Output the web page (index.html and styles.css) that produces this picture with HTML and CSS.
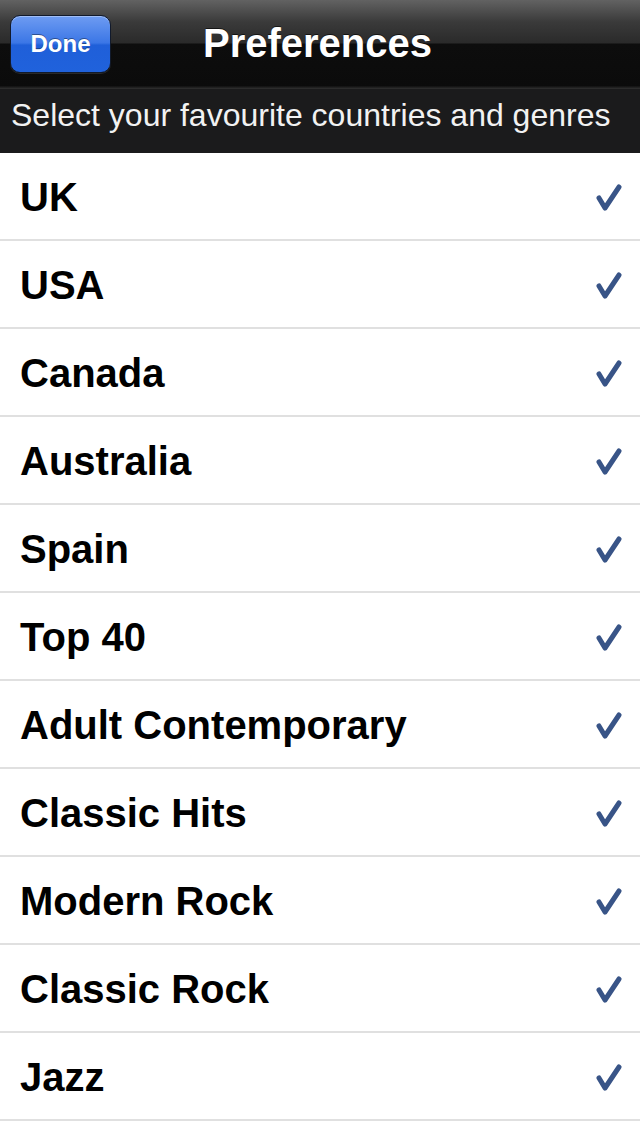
FILE: index.html
```html
<!DOCTYPE html>
<html lang="en">
<head>
  <meta charset="UTF-8" />
  <meta name="viewport" content="width=device-width, initial-scale=1.0"/>
  <title>Preferences</title>
  <link rel="stylesheet" href="styles.css">
</head>
<body>
  <div class="navbar">
    <button class="done-btn">Done</button>
    <h1 class="title">Preferences</h1>
  </div>

  <div class="subtitle">Select your favourite countries and genres</div>

  <ul class="pref-list">
    <li class="pref-row"><span>UK</span><svg class="check" viewBox="0 0 26 28"><path d="M3 15 L9 25 L23 4"/></svg></li>
    <li class="pref-row"><span>USA</span><svg class="check" viewBox="0 0 26 28"><path d="M3 15 L9 25 L23 4"/></svg></li>
    <li class="pref-row"><span>Canada</span><svg class="check" viewBox="0 0 26 28"><path d="M3 15 L9 25 L23 4"/></svg></li>
    <li class="pref-row"><span>Australia</span><svg class="check" viewBox="0 0 26 28"><path d="M3 15 L9 25 L23 4"/></svg></li>
    <li class="pref-row"><span>Spain</span><svg class="check" viewBox="0 0 26 28"><path d="M3 15 L9 25 L23 4"/></svg></li>
    <li class="pref-row"><span>Top 40</span><svg class="check" viewBox="0 0 26 28"><path d="M3 15 L9 25 L23 4"/></svg></li>
    <li class="pref-row"><span>Adult Contemporary</span><svg class="check" viewBox="0 0 26 28"><path d="M3 15 L9 25 L23 4"/></svg></li>
    <li class="pref-row"><span>Classic Hits</span><svg class="check" viewBox="0 0 26 28"><path d="M3 15 L9 25 L23 4"/></svg></li>
    <li class="pref-row"><span>Modern Rock</span><svg class="check" viewBox="0 0 26 28"><path d="M3 15 L9 25 L23 4"/></svg></li>
    <li class="pref-row"><span>Classic Rock</span><svg class="check" viewBox="0 0 26 28"><path d="M3 15 L9 25 L23 4"/></svg></li>
    <li class="pref-row"><span>Jazz</span><svg class="check" viewBox="0 0 26 28"><path d="M3 15 L9 25 L23 4"/></svg></li>
  </ul>
</body>
</html>
```

FILE: styles.css
```css
* {
  margin: 0; padding: 0; box-sizing: border-box;
}

body {
  font-family: 'Liberation Sans', Arial, sans-serif;
  background: #fff;
  color: #000;
}

.navbar {
  height: 88px;
  display: flex;
  align-items: center;
  justify-content: center;
  position: relative;
  background: linear-gradient(to bottom, #626262 0px, #3a3a3a 22px, #2a2a2a 43px, #0d0d0d 44px, #0b0b0b 86px, #202020 87px);
}

.done-btn {
  position: absolute;
  left: 10px; top: 15px;
  width: 101px; height: 58px;
  border: 1px solid #111a2c;
  border-radius: 10px;
  background: linear-gradient(to bottom, #6e9cf2 0%, #3b76e6 48%, #1f5fd9 52%, #2062dc 100%);
  box-shadow: inset 0 1px 0 rgba(255,255,255,0.35), 0 1px 0 rgba(255,255,255,0.12);
  color: #fff;
  font-family: inherit;
  font-weight: bold;
  font-size: 24px;
  text-shadow: 0 -1px 0 rgba(0,0,0,0.4);
}

.title {
  color: #fff;
  font-size: 40px;
  font-weight: bold;
  text-shadow: 0 -1px 0 rgba(0,0,0,0.6);
  margin-top: -1px;
  margin-left: -5px;
}

.subtitle {
  height: 65px;
  padding: 1px 0 0 11px;
  background: #1b1b1c;
  border-top: 1px solid #2c2c2c;
  color: #f2f2f2;
  font-size: 32px;
  line-height: 50px;
}

.pref-list {
  list-style: none;
}

.pref-row {
  height: 88px;
  border-bottom: 2px solid #e0e0e0;
  display: flex;
  align-items: center;
  justify-content: space-between;
  padding: 2px 18px 0 20px;
  font-size: 40px;
  font-weight: bold;
}

.check {
  width: 26px; height: 28px;
  fill: none;
  stroke: #385487;
  stroke-width: 5;
  stroke-linecap: round;
  stroke-linejoin: round;
}
```
